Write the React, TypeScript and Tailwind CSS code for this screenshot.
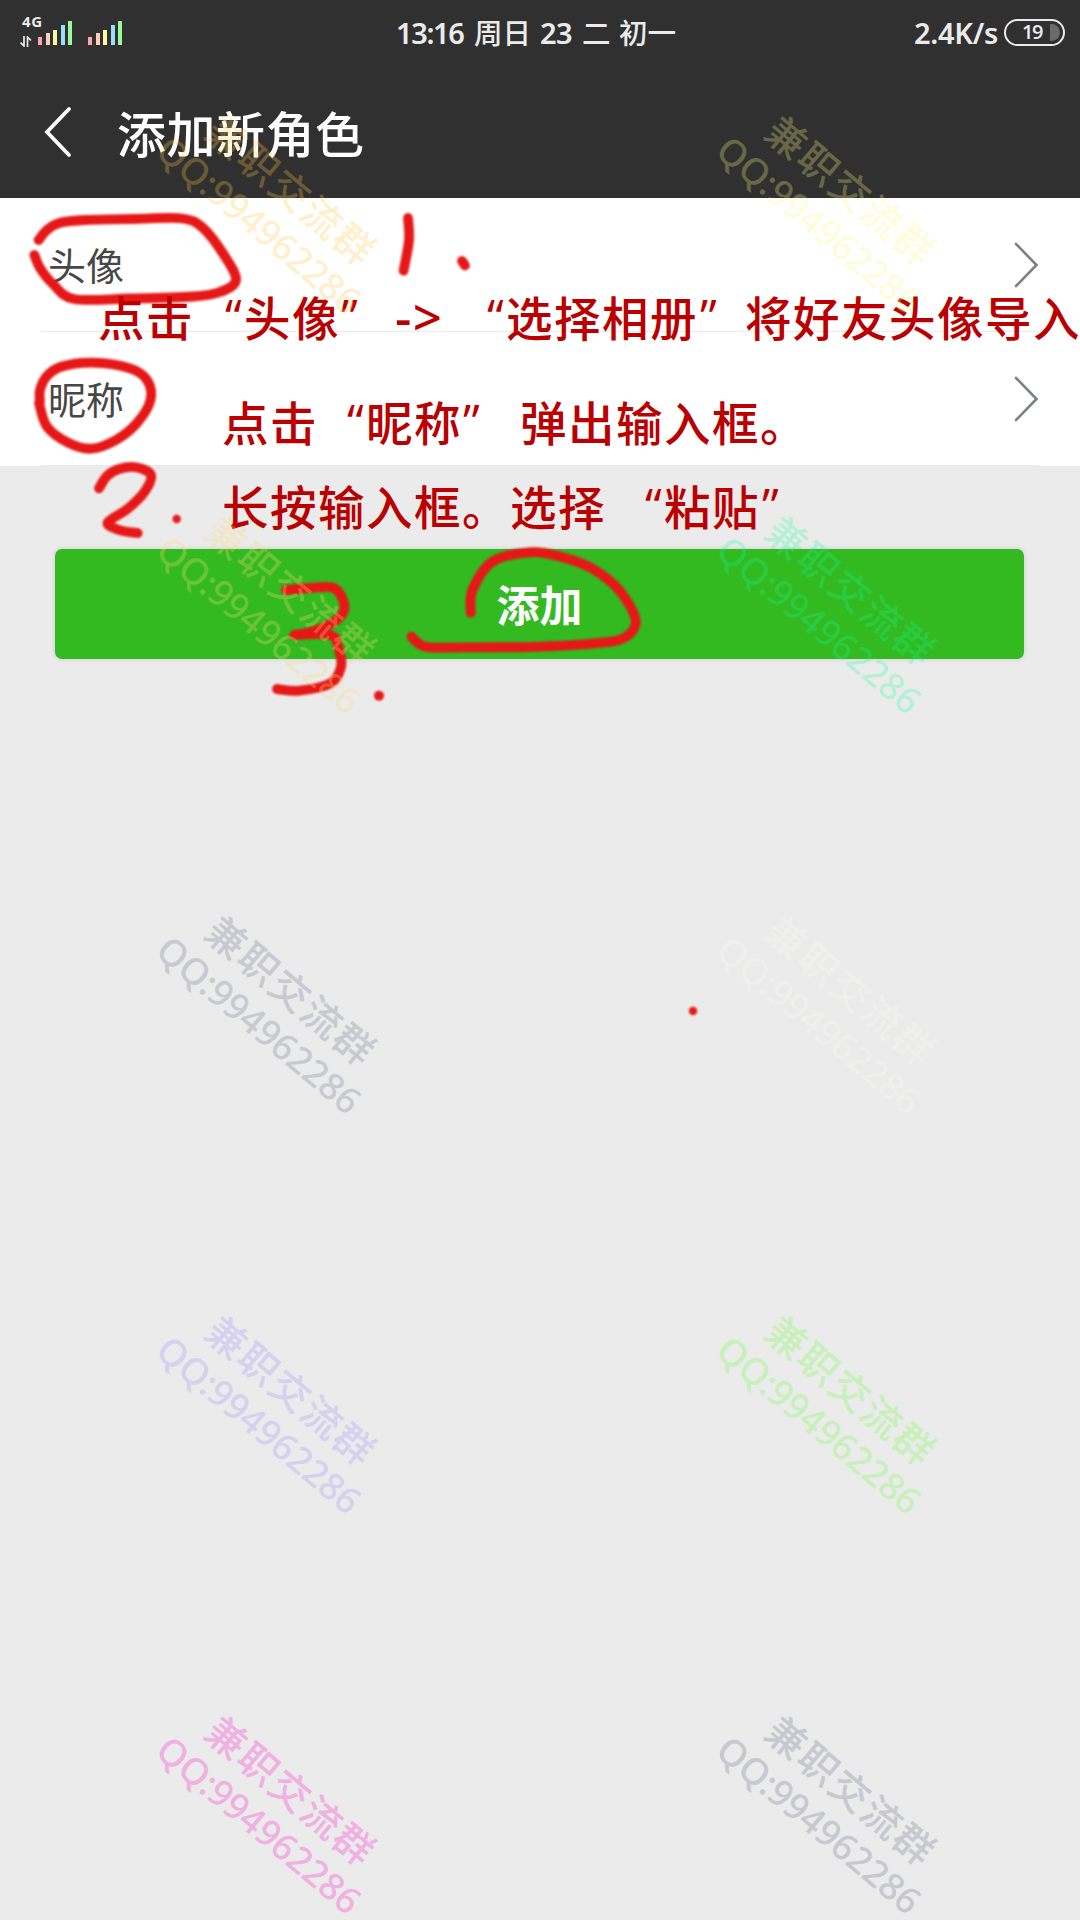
import type { ReactNode } from "react";

type Point = [number, number];

/* Smooth curve through a list of points (Catmull-Rom converted to cubic segments). */
function smooth(points: Point[]): string {
  let d = `M${points[0][0]} ${points[0][1]}`;
  for (let i = 0; i < points.length - 1; i++) {
    const p0 = points[Math.max(0, i - 1)];
    const p1 = points[i];
    const p2 = points[i + 1];
    const p3 = points[Math.min(points.length - 1, i + 2)];
    d += ` C${p1[0] + (p2[0] - p0[0]) / 6} ${p1[1] + (p2[1] - p0[1]) / 6} ${p2[0] - (p3[0] - p1[0]) / 6} ${p2[1] - (p3[1] - p1[1]) / 6} ${p2[0]} ${p2[1]}`;
  }
  return d;
}

const strokes: Point[][] = [
  [[38.6, 240], [47, 230], [60, 222.7], [86, 220], [135, 219], [182, 218.5], [203, 228], [224, 255], [236, 280], [220, 292], [193, 296.5], [130, 298.5], [74, 299], [52, 283], [40, 268], [34.4, 255]],
  [[408, 218], [409, 240], [403.6, 270.7]],
  [[462, 261], [465, 265.5]],
  [[40, 401.7], [40, 390], [47, 376], [61, 366.7], [92, 362.7], [130, 368.3], [147, 380], [150.5, 400], [137, 423], [116, 440], [91.3, 448.7], [68, 442.7], [47, 426.7], [39, 403]],
  [[99, 488.3], [107, 476], [119, 469], [136, 467.3], [151, 475], [144.6, 491.7], [127.4, 509], [107.8, 522.3], [119, 530], [137.7, 533]],
  [[286, 590], [310, 588], [334, 588], [344.4, 605], [339, 618], [317, 630], [294.4, 635]],
  [[294.4, 635], [330.6, 635], [339, 650], [341, 667], [330.6, 683.3], [299.6, 690.7], [277, 689]],
  [[470.7, 612.7], [472.5, 590], [492.4, 561.7], [530, 552.3], [560.7, 556.7], [591.7, 568.3], [619, 590], [635.7, 620], [626, 636.7], [602, 642.7], [540, 646.7], [480, 647.3], [430.4, 647.3], [418, 643], [411.5, 636.7]],
];

const dots: [number, number, number][] = [
  [176.7, 519, 4.2],
  [379, 695.7, 5],
  [693, 1011, 4.2],
];

function HandDrawing() {
  return (
    <svg className="absolute inset-0 h-[1920px] w-[1080px]" viewBox="0 0 1080 1920" fill="none">
      <g className="blur-[1.1px]" stroke="#e61717" strokeWidth="9.8" strokeLinecap="round" strokeLinejoin="round">
        {strokes.map((s, i) => (
          <path key={i} d={smooth(s)} />
        ))}
        {dots.map(([x, y, r]) => (
          <circle key={x} cx={x} cy={y} r={r} fill="#e61717" stroke="none" />
        ))}
      </g>
    </svg>
  );
}

function Signal() {
  return (
    <div className="flex items-end gap-[3.5px]">
      <span className="h-[8px] w-1 bg-[#f7a8b4]" />
      <span className="h-[12px] w-1 bg-[#fcd0bc]" />
      <span className="h-[15px] w-1 bg-[#fcfa9a]" />
      <span className="h-[20px] w-1 bg-[#9adefc]" />
      <span className="h-[24px] w-1 bg-[#9cfa98]" />
    </div>
  );
}

function StatusBar() {
  return (
    <div className="flex h-[66px] text-[#ebebeb]">
      <div className="flex w-[396px] pt-[14px] pl-[20px]">
        <div className="flex w-[18px] flex-col">
          <span className="h-[22px] pl-[2px] font-['Open_Sans'] text-[15px] leading-[15px] font-bold tracking-[0.6px]">4G</span>
          <svg className="h-[11px] w-[12px]" viewBox="0 0 12 11" fill="none" stroke="#ebebeb" strokeWidth="1.7">
            <path d="M4 0V10L.5 6.5M7.5 11V1L11 4.500" />
          </svg>
        </div>
        <div className="flex h-[31px] items-end gap-[16px]">
          <Signal />
          <Signal />
        </div>
      </div>
      <div className="flex h-[66px] items-center font-['Noto_Sans','Noto_Sans_CJK_SC',sans-serif] text-[29px] font-semibold whitespace-pre">
        <span className="w-[78px] tracking-[-1.4px]">13:16</span>
        <span className="w-[66px] text-[28.5px] font-medium">周日</span>
        <span className="w-[42px] tracking-[-0.5px]">23</span>
        <span className="w-[37px] text-[28.5px] font-medium">二</span>
        <span className="text-[28.5px] font-medium">初一</span>
      </div>
      <div className="ml-auto flex h-[66px] items-center pr-[15px]">
        <span className="mr-[6px] font-['Noto_Sans',sans-serif] text-[29px] font-semibold tracking-[-0.3px]">2.4K/s</span>
        <div className="mb-[2px] flex h-[27px] w-[61px] items-center rounded-full border-[2.5px] border-[#ebebeb] px-[3px]">
          <span className="ml-[13px] font-['Open_Sans'] text-[20px] leading-5 font-semibold tracking-[-1.500px]">19</span>
          <span className="ml-auto h-[17px] w-[10px] rounded-r-full bg-[#6a6a6a]" />
        </div>
      </div>
    </div>
  );
}

function Row({ label }: { label: string }) {
  return (
    <div className="flex h-[134px] flex-col bg-white pr-[41px] pl-[41px]">
      <div className="flex flex-1 items-center justify-between pl-[7px]">
        <span className="mb-[2px] text-[38px] text-[#474747]">{label}</span>
        <svg className="h-[48px] w-[27px]" viewBox="0 0 27 48" fill="none" stroke="#7b8186" strokeWidth="2.6" strokeLinecap="round">
          <path d="M4 3L24.500 24L4 45" />
        </svg>
      </div>
      <div className="h-px bg-[#ebebeb]" />
    </div>
  );
}

function Open() {
  return <span className="inline-block w-[19px] font-['Open_Sans'] text-[48px] tracking-normal">“</span>;
}

function Close() {
  return <span className="inline-block w-[19px] font-['Open_Sans'] text-[48px] tracking-normal">”</span>;
}

function Note({ className, children }: { className: string; children: ReactNode }) {
  return (
    <div className={`absolute flex h-[60px] items-center text-[46.5px] leading-[60px] font-medium tracking-[1.5px] whitespace-nowrap text-[#ba0000] ${className}`}>
      {children}
    </div>
  );
}

const marks = [
  "left-[136px] top-[158px] text-[#ffc846]/28",
  "left-[696px] top-[158px] text-[#fafa80]/28",
  "left-[136px] top-[558px] text-[#ffdc78]/28",
  "left-[696px] top-[558px] text-[#10ffa0]/25",
  "left-[136px] top-[958px] text-[#c8cad2]",
  "left-[696px] top-[958px] text-[#efefed]",
  "left-[136px] top-[1358px] text-[#d5d1ee]",
  "left-[696px] top-[1358px] text-[#c8f0ba]",
  "left-[136px] top-[1758px] text-[#f0b0e2]",
  "left-[696px] top-[1758px] text-[#c8c8d0]",
];

function Watermark({ className }: { className: string }) {
  return (
    <div className={`absolute flex h-[98px] w-[280px] rotate-40 flex-col items-center leading-[49px] font-medium whitespace-nowrap ${className}`}>
      <span className="pl-[3px] text-[39.5px] tracking-[2px]">兼职交流群</span>
      <span className="pr-[3px] font-['Noto_Sans'] text-[36.5px] tracking-[-0.2px]">QQ:994962286</span>
    </div>
  );
}

export default function App() {
  return (
    <div className="relative h-[1920px] w-[1080px] overflow-hidden bg-[#ebebeb] font-['Noto_Sans_CJK_SC',sans-serif]" lang="zh-CN">
      <header className="h-[199px] border-b border-[#dcd8d6] bg-[#303030]">
        <StatusBar />
        <div className="flex h-[131px] items-center pl-[43px]">
          <svg className="h-[52px] w-[30px]" viewBox="0 0 30 52" fill="none" stroke="#fff" strokeWidth="3.8" strokeLinecap="round">
            <path d="M26 3L4 26L26 49" />
          </svg>
          <h1 className="ml-[44px] text-[49px] font-medium tracking-[0.5px] text-white">添加新角色</h1>
        </div>
      </header>
      <main className="-mt-px">
        <Row label="头像" />
        <Row label="昵称" />
        <button className="mt-[83px] ml-[55px] flex h-[110px] w-[969px] items-center justify-center rounded-[7px] bg-[#32ba20] pb-[2px] text-[43px] font-bold text-white shadow-[0_0_5px_rgba(0,0,0,0.13)]">
          添加
        </button>
      </main>

      <HandDrawing />

      <Note className="top-[286px] left-[98px]">
        <span className="w-[127px]">点击</span>
        <Open />
        <span className="w-[97px]">头像</span>
        <Close />
        <span className="ml-[35px] w-[92px] font-['Noto_Sans'] text-[51px]">-&gt;</span>
        <Open />
        <span className="w-[194px]">选择相册</span>
        <Close />
        <span className="ml-[26px]">将好友头像导入</span>
      </Note>
      <Note className="top-[391px] left-[222px]">
        <span className="w-[125px]">点击</span>
        <Open />
        <span className="w-[97px]">昵称</span>
        <Close />
        <span className="ml-[38px]">弹出输入框。</span>
      </Note>
      <Note className="top-[475px] left-[222px]">
        <span className="w-[288px]">长按输入框。</span>
        <span className="w-[135px]">选择</span>
        <Open />
        <span className="w-[98px]">粘贴</span>
        <Close />
      </Note>

      {marks.map((m) => (
        <Watermark key={m} className={m} />
      ))}
    </div>
  );
}
